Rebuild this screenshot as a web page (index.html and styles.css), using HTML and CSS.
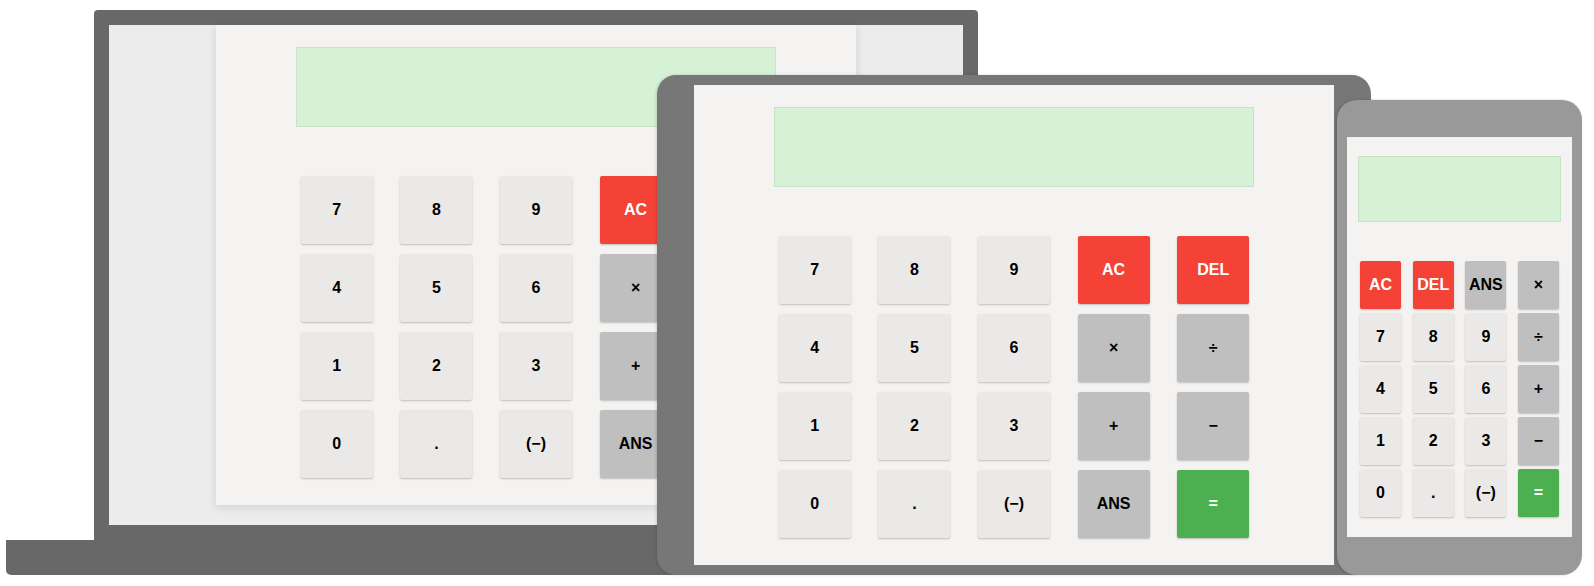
FILE: index.html
```html
<!DOCTYPE html>
<html>
<head>
<meta charset="utf-8">
<link rel="stylesheet" href="styles.css">
</head>
<body>
<div class="stage">
  <div class="laptop">
    <div class="laptop-bezel">
      <div class="laptop-screen">
        <div class="calc calc-lg calc-raised">
          <div class="display"></div>
          <div class="keypad">
            <div class="key">7</div><div class="key">8</div><div class="key">9</div><div class="key red">AC</div><div class="key red">DEL</div>
            <div class="key">4</div><div class="key">5</div><div class="key">6</div><div class="key op">×</div><div class="key op">÷</div>
            <div class="key">1</div><div class="key">2</div><div class="key">3</div><div class="key op">+</div><div class="key op">−</div>
            <div class="key">0</div><div class="key">.</div><div class="key">(−)</div><div class="key op">ANS</div><div class="key green">=</div>
          </div>
        </div>
      </div>
    </div>
    <div class="laptop-base"></div>
  </div>

  <div class="tablet">
    <div class="calc calc-lg">
      <div class="display"></div>
      <div class="keypad">
        <div class="key">7</div><div class="key">8</div><div class="key">9</div><div class="key red">AC</div><div class="key red">DEL</div>
        <div class="key">4</div><div class="key">5</div><div class="key">6</div><div class="key op">×</div><div class="key op">÷</div>
        <div class="key">1</div><div class="key">2</div><div class="key">3</div><div class="key op">+</div><div class="key op">−</div>
        <div class="key">0</div><div class="key">.</div><div class="key">(−)</div><div class="key op">ANS</div><div class="key green">=</div>
      </div>
    </div>
  </div>

  <div class="phone">
    <div class="calc calc-sm">
      <div class="display"></div>
      <div class="keypad">
        <div class="key red">AC</div><div class="key red">DEL</div><div class="key op">ANS</div><div class="key op">×</div>
        <div class="key">7</div><div class="key">8</div><div class="key">9</div><div class="key op">÷</div>
        <div class="key">4</div><div class="key">5</div><div class="key">6</div><div class="key op">+</div>
        <div class="key">1</div><div class="key">2</div><div class="key">3</div><div class="key op">−</div>
        <div class="key">0</div><div class="key">.</div><div class="key">(−)</div><div class="key green">=</div>
      </div>
    </div>
  </div>
</div>
</body>
</html>
```

FILE: styles.css
```css
* { box-sizing: border-box; }

html, body {
  margin: 0;
  padding: 0;
  background: #ffffff;
  font-family: "Liberation Sans", Arial, sans-serif;
}

.stage {
  position: relative;
  width: 1594px;
  height: 586px;
  overflow: hidden;
}

/* ---------- Laptop ---------- */
.laptop {
  position: absolute;
  left: 6px;
  top: 10px;
  width: 1060px;
  display: flex;
  flex-direction: column;
  align-items: center;
}

.laptop-bezel {
  width: 884px;
  height: 530px;
  padding: 15px;
  background: #686868;
  border-radius: 4px 4px 0 0;
}

.laptop-screen {
  width: 100%;
  height: 100%;
  background: #ececec;
  display: flex;
  justify-content: center;
  align-items: flex-start;
}

.laptop-base {
  width: 1060px;
  height: 35px;
  background: #686868;
  border-radius: 0 0 5px 5px;
}

/* ---------- Tablet ---------- */
.tablet {
  position: absolute;
  left: 657px;
  top: 75px;
  width: 714px;
  height: 500px;
  padding: 10px 36px 10px 37px;
  background: #777777;
  border-radius: 19px;
  box-shadow: -1px 0 3px rgba(0, 0, 0, 0.15);
}

/* ---------- Phone ---------- */
.phone {
  position: absolute;
  left: 1337px;
  top: 100px;
  width: 245px;
  height: 475px;
  padding: 37px 10px 38px 10px;
  background: #999999;
  border-radius: 20px;
  box-shadow: -1px 0 3px rgba(0, 0, 0, 0.18);
}

/* ---------- Calculator ---------- */
.calc {
  background: #f4f3f1;
  display: flex;
  flex-direction: column;
  align-items: center;
}

.calc-raised {
  box-shadow: 0 2px 9px rgba(0, 0, 0, 0.12);
}

.display {
  background: #d6f2d6;
  border: 1px solid #c6e3c6;
}

.keypad {
  display: grid;
  justify-content: center;
}

.key {
  display: flex;
  align-items: center;
  justify-content: center;
  background: #eae9e7;
  color: #000;
  font-weight: bold;
  font-size: 16px;
  border-radius: 2px;
  box-shadow: 0 1px 2px rgba(0, 0, 0, 0.22);
}

.key.op { background: #c0bfbf; }
.key.red { background: #f44336; color: #fff; }
.key.green { background: #4caf50; color: #fff; }

/* large (laptop / tablet) */
.calc-lg {
  width: 640px;
  height: 480px;
  padding-top: 22px;
}
.calc-lg .display {
  width: 480px;
  height: 80px;
}
.calc-lg .keypad {
  margin-top: 49px;
  grid-template-columns: repeat(5, 72px);
  grid-auto-rows: 68px;
  column-gap: 27.6px;
  row-gap: 10px;
  width: 100%;
}

/* small (phone) */
.calc-sm {
  width: 225px;
  height: 400px;
  padding-top: 19px;
}
.calc-sm .display {
  width: 203px;
  height: 66px;
}
.calc-sm .keypad {
  margin-top: 39px;
  grid-template-columns: repeat(4, 41px);
  grid-auto-rows: 48px;
  column-gap: 11.67px;
  row-gap: 4px;
  width: 100%;
}
```
